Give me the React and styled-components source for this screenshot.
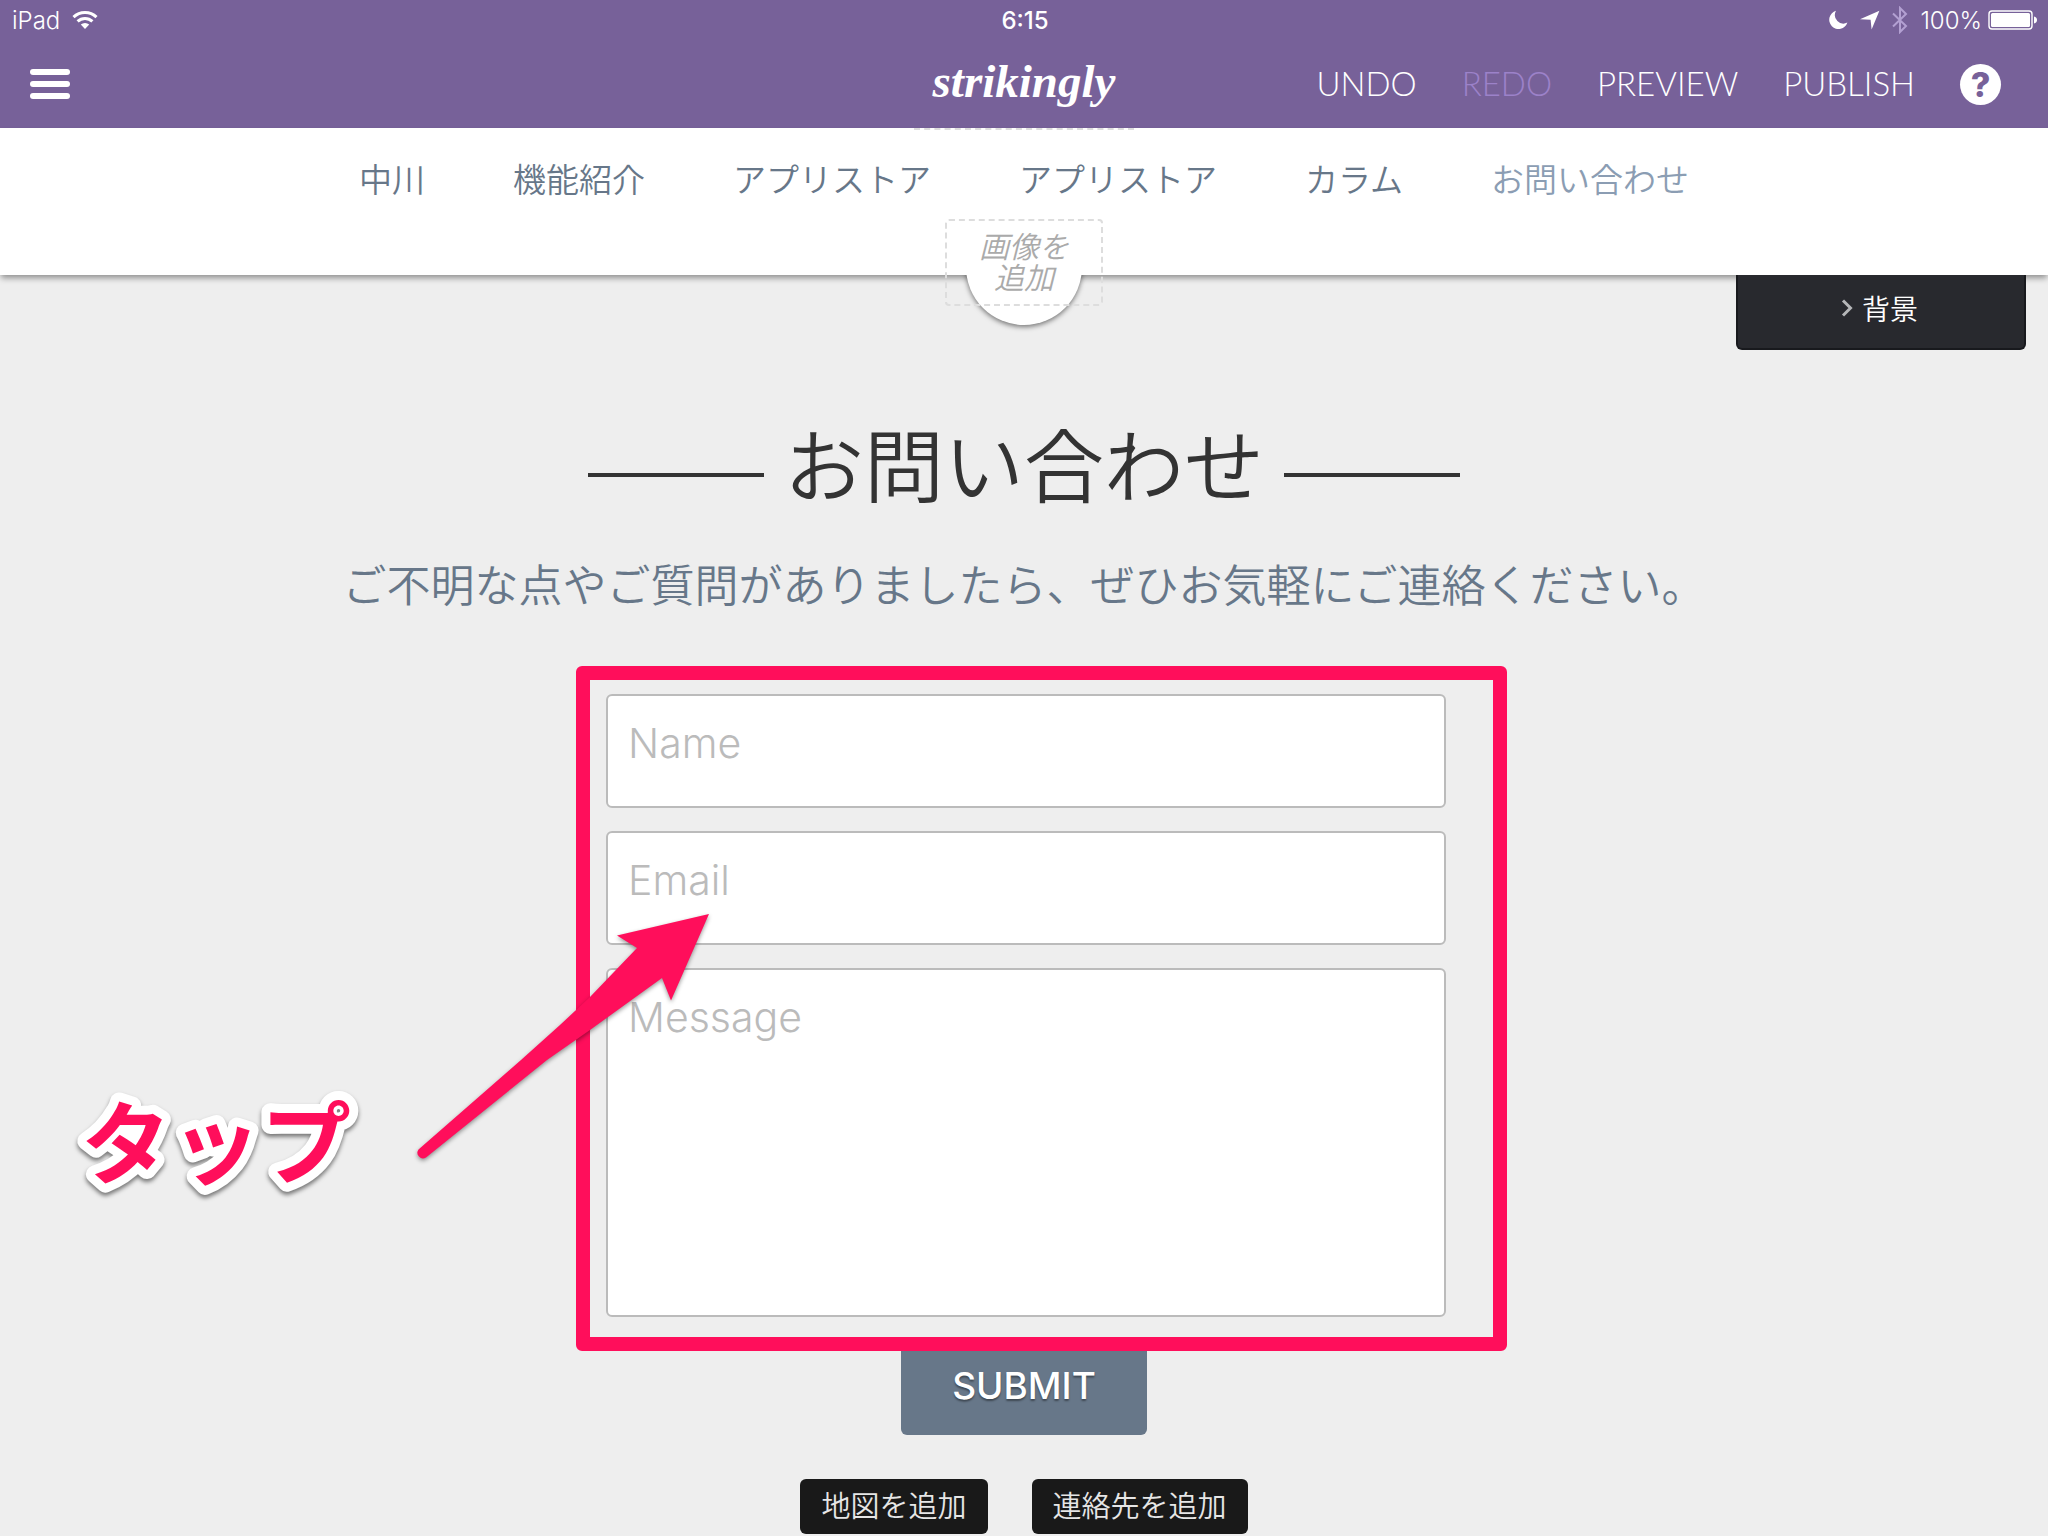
import styled, { createGlobalStyle } from "styled-components";

const navItems = [
  { id: 1, label: "中川" },
  { id: 2, label: "機能紹介" },
  { id: 3, label: "アプリストア" },
  { id: 4, label: "アプリストア" },
  { id: 5, label: "カラム" },
  { id: 6, label: "お問い合わせ", active: true },
];

const StatusBar = () => (
  <Status>
    <StatusSide>
      <span>iPad</span>
      <svg width="26" height="20" viewBox="0 0 26 20" fill="none" stroke="#fff" strokeWidth="3">
        <path d="M1.5 7.2a16.5 16.5 0 0 1 23 0" />
        <path d="M5.6 11.4a10.6 10.6 0 0 1 14.8 0" />
        <path d="M8.8 14.6a6 6 0 0 1 8.4 0L13 19z" fill="#fff" stroke="none" />
      </svg>
    </StatusSide>
    <Clock>6:15</Clock>
    <StatusSide $end>
      <svg width="20" height="20" viewBox="0 0 20 20" fill="#fff">
        <path d="M8 .8A9.3 9.3 0 1 0 19.4 12.6 8.6 8.6 0 0 1 8 .8z" />
      </svg>
      <svg width="20" height="20" viewBox="0 0 20 20" fill="#fff">
        <path d="M19.4.8 11.6 19.6 10.6 9.8 0 9.2z" />
      </svg>
      <svg width="16" height="28" viewBox="0 0 16 28" fill="none" stroke="#b3a0d2" strokeWidth="2">
        <path d="M1 7.5 14 20 8 26V2l6 6L1 20.5" />
      </svg>
      <span>100%</span>
      <svg width="50" height="20" viewBox="0 0 50 20" fill="#fff">
        <rect x="1" y="1" width="43" height="18" rx="3" fill="none" stroke="#fff" strokeWidth="1.4" />
        <rect x="3" y="3" width="39" height="14" rx="1.5" />
        <path d="M46 6.5c4 .4 4 6.6 0 7z" />
      </svg>
    </StatusSide>
  </Status>
);

const Toolbar = () => (
  <Tools>
    <MenuButton type="button" aria-label="Menu">
      <i />
      <i />
      <i />
    </MenuButton>
    <Logo href="#">strikingly</Logo>
    <Actions>
      <Action type="button">UNDO</Action>
      <Action type="button" disabled>REDO</Action>
      <Action type="button">PREVIEW</Action>
      <Action type="button">PUBLISH</Action>
      <HelpButton type="button">?</HelpButton>
    </Actions>
  </Tools>
);

const SiteNav = () => (
  <Nav>
    <DashedEdge />
    <NavList>
      {navItems.map(({ id, label, active }) =>
        <li key={id}>
          <NavLink href="#" $active={active}>{label}</NavLink>
        </li>)}
    </NavList>
    <Notch />
    <AddImage type="button">画像を<br />追加</AddImage>
  </Nav>
);

const Arrow = () => (
  <ArrowSvg width="310" height="265" viewBox="0 0 310 265">
    <path
      d="M8.5 244.5 111 155 150 120 180 92 227 43 207 30.500 299 9 261 95.500 252 73 180 125 137 155 16 252.500A5.600 5.600 0 0 1 8.500 244.500z"
      fill="#ff0e5b"
    />
  </ArrowSvg>
);

const TapLabel = () => (
  <TapSvg width="290" height="120" viewBox="0 0 290 120">
    <text x="13" y="92">タップ</text>
  </TapSvg>
);

const ContactForm = () => (
  <Form onSubmit={(e) => e.preventDefault()}>
    <Fields>
      <Field type="text" placeholder="Name" aria-label="Name" />
      <Field type="email" placeholder="Email" aria-label="Email" />
      <MessageField placeholder="Message" aria-label="Message" />
    </Fields>
    <Submit type="submit">SUBMIT</Submit>
    <Highlight />
    <Arrow />
    <TapLabel />
  </Form>
);

export default function App() {
  return (
    <>
      <GlobalStyle />
      <Header>
        <StatusBar />
        <Toolbar />
      </Header>
      <SiteNav />
      <Section>
        <BackgroundButton type="button">
          <svg width="12" height="18" viewBox="0 0 12 18" fill="none" stroke="#b5b6b8" strokeWidth="3">
            <path d="M2 1.500 9.500 9 2 16.500" />
          </svg>
          背景
        </BackgroundButton>
        <Title>お問い合わせ</Title>
        <Lead>ご不明な点やご質問がありましたら、ぜひお気軽にご連絡ください。</Lead>
        <ContactForm />
        <AddRow>
          <AddButton type="button">地図を追加</AddButton>
          <AddButton type="button">連絡先を追加</AddButton>
        </AddRow>
      </Section>
    </>
  );
}

const GlobalStyle = createGlobalStyle`
  * {
    box-sizing: border-box;
  }
  body {
    margin: 0;
    background: #eeeeee;
    font-family: Inter, "Noto Sans CJK JP", sans-serif;
    font-weight: 350;
  }
  button, input, textarea {
    font-family: inherit;
    font-weight: inherit;
  }
  button {
    border: 0;
    padding: 0;
    cursor: pointer;
  }
`;

const Header = styled.header`
  background: #776199;
  color: #fff;
`;

const Status = styled.div`
  display: grid;
  grid-template-columns: 1fr auto 1fr;
  align-items: center;
  height: 40px;
  padding: 0 10px 0 12px;
  font-size: 24px;
`;

const StatusSide = styled.div`
  display: flex;
  align-items: center;
  justify-content: ${({ $end }) => ($end ? "flex-end" : "flex-start")};
  gap: 12px;

  span + svg {
    margin-left: ${({ $end }) => ($end ? "-6px" : "0")};
  }
`;

const Clock = styled.time`
  font-weight: 500;
`;

const Tools = styled.div`
  display: grid;
  grid-template-columns: 1fr auto 1fr;
  align-items: center;
  height: 88px;
  padding: 0 30px;
`;

const MenuButton = styled.button`
  display: flex;
  flex-direction: column;
  justify-content: space-between;
  width: 40px;
  height: 30px;
  background: none;

  i {
    height: 6px;
    border-radius: 3px;
    background: #fff;
  }
`;

const Logo = styled.a`
  padding-bottom: 6px;
  color: #fff;
  font: italic 700 47px/60px "Liberation Serif", serif;
  text-decoration: none;
`;

const Actions = styled.div`
  display: flex;
  align-items: center;
  justify-content: flex-end;
  gap: 45px;
  padding-right: 17px;
`;

const Action = styled.button`
  padding-bottom: 2px;
  background: none;
  color: #fff;
  font-family: Lato, sans-serif;
  font-size: 33px;
  font-weight: 300;
  line-height: 40px;

  &:disabled {
    color: #9c82c9;
  }
`;

const HelpButton = styled.button`
  width: 41px;
  height: 41px;
  border-radius: 50%;
  background: #fff;
  color: #776199;
  font-size: 34px;
  font-weight: 800;
  line-height: 41px;
`;

const Nav = styled.nav`
  position: relative;
  z-index: 1;
  height: 147px;
  padding-top: 28px;
  background: #fff;
  box-shadow: 0 4px 6px -1px rgba(0, 0, 0, 0.4);
`;

const DashedEdge = styled.div`
  position: absolute;
  top: 0;
  left: 50%;
  width: 220px;
  border-top: 2px dashed #dddddd;
  transform: translateX(-50%);
`;

const NavList = styled.ul`
  display: flex;
  justify-content: center;
  gap: 88px;
  margin: 0;
  padding: 0;
  list-style: none;
`;

const NavLink = styled.a`
  color: ${({ $active }) => ($active ? "#8b9db3" : "#677789")};
  font-size: 33px;
  line-height: 48px;
  text-decoration: none;
`;

/* lower half of the round logo holder, hanging below the bar */
const Notch = styled.div`
  position: absolute;
  top: 100%;
  left: 50%;
  width: 140px;
  height: 64px;
  overflow: hidden;
  transform: translateX(-50%);

  &::before {
    content: "";
    position: absolute;
    bottom: 14px;
    left: 12px;
    width: 116px;
    height: 116px;
    border-radius: 50%;
    background: #fff;
    box-shadow: 0 2px 5px rgba(0, 0, 0, 0.5);
  }
`;

const AddImage = styled.button`
  position: absolute;
  top: 91px;
  left: 50%;
  width: 158px;
  height: 87px;
  border: 2px dashed #dddddd;
  border-radius: 4px;
  background: none;
  color: #aaaaaa;
  font-size: 30px;
  font-style: italic;
  line-height: 31px;
  transform: translateX(-50%);
`;

const Section = styled.main`
  display: flex;
  flex-direction: column;
  align-items: center;
  padding-bottom: 2px;
`;

const BackgroundButton = styled.button`
  display: flex;
  align-items: center;
  justify-content: center;
  align-self: flex-end;
  gap: 9px;
  width: 290px;
  height: 75px;
  margin-right: 22px;
  padding: 0 3px 8px 0;
  border: 2px solid #18191d;
  border-top: 0;
  border-radius: 0 0 6px 6px;
  background: #28292e;
  color: #fff;
  font-size: 28px;
  position: relative;
  z-index: 2;
`;

const Title = styled.h1`
  display: flex;
  align-items: center;
  gap: 20px;
  margin: 69px 0 0;
  color: #333333;
  font-size: 80px;
  font-weight: 350;
  line-height: 96px;

  &::before,
  &::after {
    content: "";
    width: 176px;
    height: 4px;
    margin-top: 16px;
    background: #333333;
  }
`;

const Lead = styled.p`
  margin: 39px 0 0;
  color: #677789;
  font-size: 44px;
  line-height: 64px;
`;

const Form = styled.form`
  position: relative;
  display: flex;
  flex-direction: column;
  gap: 20px;
  width: 100%;
  max-width: 844px;
  margin-top: 76px;
`;

const Fields = styled.div`
  display: flex;
  flex-direction: column;
  gap: 23px;
  padding-left: 4px;
`;

const Field = styled.input`
  width: 100%;
  height: 114px;
  padding: 0 20px 16px;
  border: 2px solid #bbbbbb;
  border-radius: 6px;
  background: #fff;
  color: #333333;
  font-size: 41px;
  font-weight: 300;

  &::placeholder {
    color: #bbbbbb;
    opacity: 1;
  }
`;

const MessageField = styled(Field).attrs({ as: "textarea" })`
  height: 349px;
  padding: 22px 20px;
  line-height: 50px;
  resize: none;
`;

const Submit = styled.button`
  align-self: center;
  width: 246px;
  height: 98px;
  padding-bottom: 2px;
  border-radius: 6px;
  background: #677789;
  color: #fff;
  font-size: 37px;
  font-weight: 500;
  text-shadow: 0 2px 2px rgba(0, 0, 0, 0.4);
`;

const Highlight = styled.div`
  position: absolute;
  top: -28px;
  right: -61px;
  bottom: 84px;
  left: -26px;
  border: 14px solid #ff0e5b;
  border-radius: 6px;
  pointer-events: none;
`;

const ArrowSvg = styled.svg`
  position: absolute;
  top: 211px;
  left: -192px;
  filter: drop-shadow(0 2px 2px rgba(0, 0, 0, 0.4));
  pointer-events: none;
`;

const TapSvg = styled.svg`
  position: absolute;
  top: 391px;
  left: -534px;
  overflow: visible;
  filter: drop-shadow(0 3px 2px rgba(0, 0, 0, 0.5));
  pointer-events: none;

  text {
    fill: #ff0e5b;
    stroke: #fff;
    stroke-width: 18px;
    stroke-linejoin: round;
    paint-order: stroke fill;
    font-family: "Noto Sans CJK JP", sans-serif;
    font-size: 90px;
    font-weight: 700;
  }
`;

const AddRow = styled.div`
  display: flex;
  gap: 44px;
  margin-top: 44px;
`;

const AddButton = styled.button`
  height: 55px;
  padding: 0 21px;
  border-radius: 6px;
  background: #191919;
  color: #e6e6e6;
  font-size: 29px;
  line-height: 55px;
`;
